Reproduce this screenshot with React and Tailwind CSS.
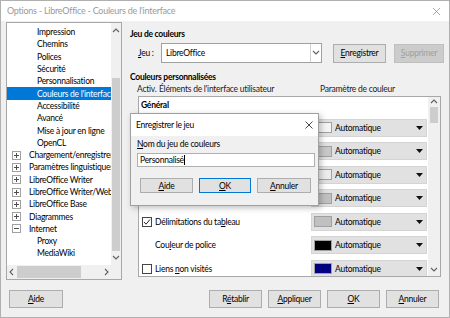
import React from "react";

function Chev({ dir = "down", className = "" }) {
  const d = {
    up: "M1 5 L4 2 L7 5",
    down: "M1 2 L4 5 L7 2",
    left: "M5 1 L2 4 L5 7",
    right: "M3 1 L6 4 L3 7",
  }[dir];
  return (
    <svg width="8" height="8" viewBox="0 0 8 8" className={className}>
      <path d={d} fill="none" stroke="#606060" strokeWidth="1.1" />
    </svg>
  );
}

function Expander({ open }) {
  return (
    <svg width="9" height="9" viewBox="0 0 9 9" className="shrink-0">
      <rect x="0.5" y="0.5" width="8" height="8" fill="white" stroke="#a0a0a0" />
      <path d="M2 4.5 H7" stroke="#505050" />
      {!open && <path d="M4.5 2 V7" stroke="#505050" />}
    </svg>
  );
}

function Tri() {
  return (
    <svg width="7" height="4" viewBox="0 0 7 4">
      <path d="M0 0 H7 L3.5 4 Z" fill="#111" />
    </svg>
  );
}

function Check({ checked }) {
  return (
    <div className="w-[10px] h-[10px] border border-[#444] bg-white flex items-center justify-center shrink-0">
      {checked && (
        <svg width="8" height="8" viewBox="0 0 8 8">
          <path d="M1 4 L3 6.2 L7 1.5" fill="none" stroke="#222" strokeWidth="1" />
        </svg>
      )}
    </div>
  );
}

function Btn({ children, className = "" }) {
  return (
    <div
      className={`h-[18px] w-[53px] flex items-center justify-center bg-[#e1e1e1] border border-[#adadad] text-black ${className}`}
    >
      {children}
    </div>
  );
}

const treeItems = [
  { t: "Impression", lvl: 1 },
  { t: "Chemins", lvl: 1 },
  { t: "Polices", lvl: 1 },
  { t: "Sécurité", lvl: 1 },
  { t: "Personnalisation", lvl: 1 },
  { t: "Couleurs de l'interface", lvl: 1, sel: true },
  { t: "Accessibilité", lvl: 1 },
  { t: "Avancé", lvl: 1 },
  { t: "Mise à jour en ligne", lvl: 1 },
  { t: "OpenCL", lvl: 1 },
  { t: "Chargement/enregistrement", lvl: 0 },
  { t: "Paramètres linguistiques", lvl: 0 },
  { t: "LibreOffice Writer", lvl: 0 },
  { t: "LibreOffice Writer/Web", lvl: 0 },
  { t: "LibreOffice Base", lvl: 0 },
  { t: "Diagrammes", lvl: 0 },
  { t: "Internet", lvl: 0, open: true },
  { t: "Proxy", lvl: 1 },
  { t: "MediaWiki", lvl: 1 },
];

const colorRows = [
  { label: "Arrière-plan du document", check: false, sw: "#f4f4f4" },
  { label: "Limites du texte", check: true, sw: "#c8c8c8" },
  { label: "Arrière-plan de l'application", check: false, sw: "#ececec" },
  { label: "Limites des objets", check: true, sw: "#c0c0c0" },
  { label: <>Délimitations du ta<u>b</u>leau</>, check: true, sw: "#c0c0c0" },
  { label: <>Cou<u>l</u>eur de police</>, check: null, sw: "#000000" },
  { label: <>Liens <u>n</u>on visités</>, check: false, sw: "#000080" },
];

export default function App() {
  return (
    <div className="w-[450px] h-[318px] bg-[#f0f0f0] border border-[#b0b0b0] relative overflow-hidden font-['Lato',sans-serif] text-[8.5px] tracking-[-0.25px] text-black leading-[12px]">
      {/* Title bar */}
      <div className="h-[20px] bg-white flex items-center justify-between pl-[6px] pr-[8px]">
        <span className="text-[#9a9a9a] text-[9px]">Options - LibreOffice - Couleurs de l'interface</span>
        <svg width="9" height="9" viewBox="0 0 9 9">
          <path d="M1 1 L8 8 M8 1 L1 8" stroke="#a0a0a0" strokeWidth="0.9" />
        </svg>
      </div>

      {/* Main */}
      <div className="flex pl-[5px] pt-[1px]">
        {/* Tree */}
        <div className="w-[116px] h-[258px] bg-white border border-[#a8a8a8] flex flex-col">
          <div className="flex flex-1 min-h-0">
            <div className="flex-1 pt-[3px] overflow-hidden">
              {treeItems.map((it, i) => (
                <div
                  key={i}
                  className={`h-[12.3px] flex items-center whitespace-nowrap ${
                    it.sel ? "bg-[#0078d7] text-white" : ""
                  } ${it.lvl === 1 ? "pl-[30px]" : "pl-[5px]"}`}
                >
                  {it.lvl === 0 && (
                    <span className="mr-[8px] flex">
                      <Expander open={it.open} />
                    </span>
                  )}
                  {it.t}
                </div>
              ))}
            </div>
            <div className="w-[10px] flex flex-col items-center bg-[#f0f0f0]">
              <div className="h-[15px] flex items-center justify-center">
                <Chev dir="up" />
              </div>
              <div className="flex-1 w-full flex flex-col">
                <div className="h-[40px]" />
                <div className="flex-1 bg-[#cdcdcd] mx-[1px]" />
              </div>
              <div className="h-[14px] flex items-center justify-center">
                <Chev dir="down" />
              </div>
            </div>
          </div>
          <div className="h-[14px] flex items-center bg-[#f0f0f0]">
            <div className="w-[10px] flex justify-center">
              <Chev dir="left" />
            </div>
            <div className="w-[64px] h-[12px] bg-[#cdcdcd]" />
            <div className="w-[20px]" />
            <div className="w-[10px] flex justify-center">
              <Chev dir="right" />
            </div>
            <div className="flex-1" />
          </div>
        </div>

        {/* Right panel */}
        <div className="ml-[6px] flex-1 flex flex-col pr-[4px]">
          <div className="mt-[6px] pl-[2px] font-bold">Jeu de couleurs</div>
          <div className="mt-[3px] flex items-center h-[20px]">
            <span className="ml-[10px] w-[23px]">
              <u>J</u>eu :
            </span>
            <div className="w-[161px] h-[20px] bg-white border border-[#a0a0a0] flex items-center">
              <span className="pl-[4px] flex-1">LibreOffice</span>
              <div className="w-[11px] h-full border-l border-[#d0d0d0] flex items-center justify-center">
                <Chev dir="down" />
              </div>
            </div>
            <Btn className="ml-[11px] w-[49px] h-[19px]">
              <span>
                <u>E</u>nregistrer
              </span>
            </Btn>
            <div className="ml-[8px] w-[50px] h-[19px] flex items-center justify-center bg-[#cccccc] border border-[#bfbfbf] text-[#a0a0a0]">
              <span>
                <u>S</u>upprimer
              </span>
            </div>
          </div>
          <div className="mt-[8px] pl-[2px] font-bold">Couleurs personnalisées</div>
          <div className="flex pl-[9px] text-[#222]">
            <span className="w-[22px]">Activ.</span>
            <span className="w-[161px]">Éléments de l'interface utilisateur</span>
            <span>Paramètre de couleur</span>
          </div>
          {/* List */}
          <div className="ml-[10px] mt-[1px] w-[303px] h-[181px] bg-white border border-[#a8a8a8] flex overflow-hidden">
            <div className="flex-1 flex flex-col">
              <div className="h-[19px] pt-[2px] pl-[2px] font-bold shrink-0">Général</div>
              {colorRows.map((r, i) => (
                <div key={i} className="h-[23.5px] flex items-center shrink-0">
                  <div className="w-[172px] flex items-center pl-[3px]">
                    {r.check === null ? (
                      <span className="pl-[13px]">{r.label}</span>
                    ) : (
                      <>
                        <Check checked={r.check} />
                        <span className="ml-[3px]">{r.label}</span>
                      </>
                    )}
                  </div>
                  <div className="w-[116px] h-[18px] bg-[#e1e1e1] border border-[#d4d4d4] flex items-center pl-[2px] pr-[3px]">
                    <div
                      className="w-[18px] h-[11px] border border-[#a0a0a0]"
                      style={{ background: r.sw }}
                    />
                    <span className="ml-[3px] flex-1">Automatique</span>
                    <Tri />
                  </div>
                </div>
              ))}
            </div>
            <div className="w-[12px] flex flex-col items-center bg-[#f0f0f0]">
              <div className="h-[10px] flex items-center justify-center">
                <Chev dir="up" />
              </div>
              <div className="w-[8px] h-[16px] bg-[#cdcdcd]" />
              <div className="flex-1" />
              <div className="h-[12px] flex items-center justify-center">
                <Chev dir="down" />
              </div>
            </div>
          </div>
        </div>
      </div>

      {/* Footer */}
      <div className="flex items-center mt-[10px] pl-[8px]">
        <Btn className="w-[54px]">
          <span>
            <u>A</u>ide
          </span>
        </Btn>
        <div className="ml-[146px] flex gap-[6px]">
          <Btn>
            <span>
              R<u>é</u>tablir
            </span>
          </Btn>
          <Btn>
            <span>
              <u>A</u>ppliquer
            </span>
          </Btn>
          <Btn>
            <span>
              <u>O</u>K
            </span>
          </Btn>
          <Btn>
            <span>
              <u>A</u>nnuler
            </span>
          </Btn>
        </div>
      </div>

      {/* Dialog overlay */}
      <div className="absolute left-[129px] top-[112px] w-[189px] h-[93px] bg-[#f0f0f0] border border-[#a0a0a0] shadow-[2px_2px_6px_rgba(0,0,0,0.25)] flex flex-col">
        <div className="h-[22px] bg-white flex items-center justify-between pl-[5px] pr-[5px]">
          <span>Enregistrer le jeu</span>
          <svg width="8" height="8" viewBox="0 0 8 8">
            <path d="M0.5 0.5 L7.5 7.5 M7.5 0.5 L0.5 7.5" stroke="#333" strokeWidth="0.9" />
          </svg>
        </div>
        <div className="pl-[6px] mt-[2px]">
          <u>N</u>om du jeu de couleurs
        </div>
        <div className="ml-[6px] mt-[3px] w-[178px] h-[14px] bg-white border border-[#b0b0b0] flex items-center pl-[2px]">
          Personnalisé
          <span className="w-[1px] h-[10px] bg-black" />
        </div>
        <div className="flex mt-[11px] pl-[9px] gap-[6px]">
          <div className="w-[53px] h-[15px] flex items-center justify-center bg-[#e1e1e1] border border-[#adadad]">
            <span>
              <u>A</u>ide
            </span>
          </div>
          <div className="w-[52px] h-[15px] flex items-center justify-center bg-[#e1e1e1] border border-[#0078d7]">
            <span>
              <u>O</u>K
            </span>
          </div>
          <div className="w-[54px] h-[15px] flex items-center justify-center bg-[#e1e1e1] border border-[#adadad]">
            <span>
              <u>A</u>nnuler
            </span>
          </div>
        </div>
      </div>
    </div>
  );
}
